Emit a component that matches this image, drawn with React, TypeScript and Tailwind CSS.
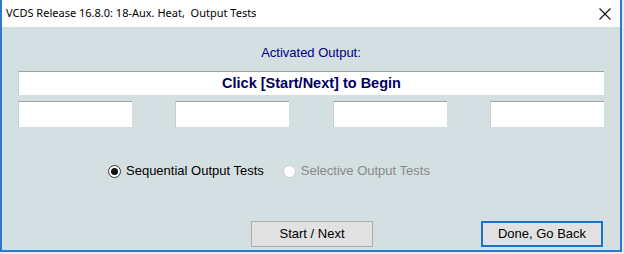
import React from "react";

const FONT = { fontFamily: '"Liberation Sans", Arial, sans-serif' };

function Field({ className = "", children }: { className?: string; children?: React.ReactNode }) {
  return (
    <div
      className={`bg-white border-t border-l border-t-[#a0a0a0] border-l-[#c8d0d0] flex items-center justify-center ${className}`}
    >
      {children}
    </div>
  );
}

function Radio({ label, checked, disabled }: { label: string; checked?: boolean; disabled?: boolean }) {
  return (
    <div className="flex items-center gap-[5px]">
      <span
        className={`w-[13px] h-[13px] rounded-full border flex items-center justify-center ${
          disabled ? "border-[#cccccc] bg-white" : "border-[#333333] bg-white"
        }`}
      >
        {checked && <span className="w-[7px] h-[7px] rounded-full bg-[#111111]" />}
      </span>
      <span className={`text-[13px] leading-[16px] ${disabled ? "text-[#8a8a8a]" : "text-black"}`}>{label}</span>
    </div>
  );
}

export default function App() {
  return (
    <div className="w-[624px] h-[254px] bg-[#e4ecee] overflow-hidden" style={FONT}>
      <div className="w-[622px] h-[252px] flex flex-col border-l-2 border-r-2 border-b-2 border-[#2b79cc] bg-[#d3dfe0]">
        {/* title bar */}
        <div className="h-[27px] bg-white flex items-center justify-between pl-[4px] pr-[9px] shrink-0">
          <span className="text-[11px] text-black" style={{ fontFamily: '"Noto Sans", "Open Sans", sans-serif' }}>
            VCDS Release 16.8.0: 18-Aux. Heat,&nbsp; Output Tests
          </span>
          <svg width="12" height="12" viewBox="0 0 12 12" className="mt-[1px]">
            <path d="M0.5 0.5 L11.5 11.5 M11.5 0.5 L0.5 11.5" stroke="#111" strokeWidth="1.1" fill="none" />
          </svg>
        </div>

        {/* body */}
        <div className="flex flex-col pl-[16px] pr-[16px] pt-[18px]">
          <div className="h-[16px] leading-[16px] text-center text-[13px] text-[#000080]">Activated Output:</div>

          <Field className="mt-[10px] h-[24px]">
            <span className="text-[14.5px] font-bold text-[#000060]">Click [Start/Next] to Begin</span>
          </Field>

          <div className="mt-[6px] flex justify-between">
            <Field className="w-[114px] h-[26px]" />
            <Field className="w-[114px] h-[26px]" />
            <Field className="w-[114px] h-[26px]" />
            <Field className="w-[114px] h-[26px]" />
          </div>

          <div className="mt-[36px] h-[16px] flex items-center gap-[19px] pl-[90px]">
            <Radio label="Sequential Output Tests" checked />
            <Radio label="Selective Output Tests" disabled />
          </div>

          <div className="mt-[42px] flex justify-end gap-[108px] pr-[1px]">
            <button className="w-[122px] h-[26px] bg-[#e1e1e1] border border-[#adadad] text-[13px] text-black">
              Start / Next
            </button>
            <button className="w-[122px] h-[26px] bg-[#e1e1e1] border-2 border-[#1a73cc] text-[13px] text-black">
              Done, Go Back
            </button>
          </div>
        </div>
      </div>
    </div>
  );
}
